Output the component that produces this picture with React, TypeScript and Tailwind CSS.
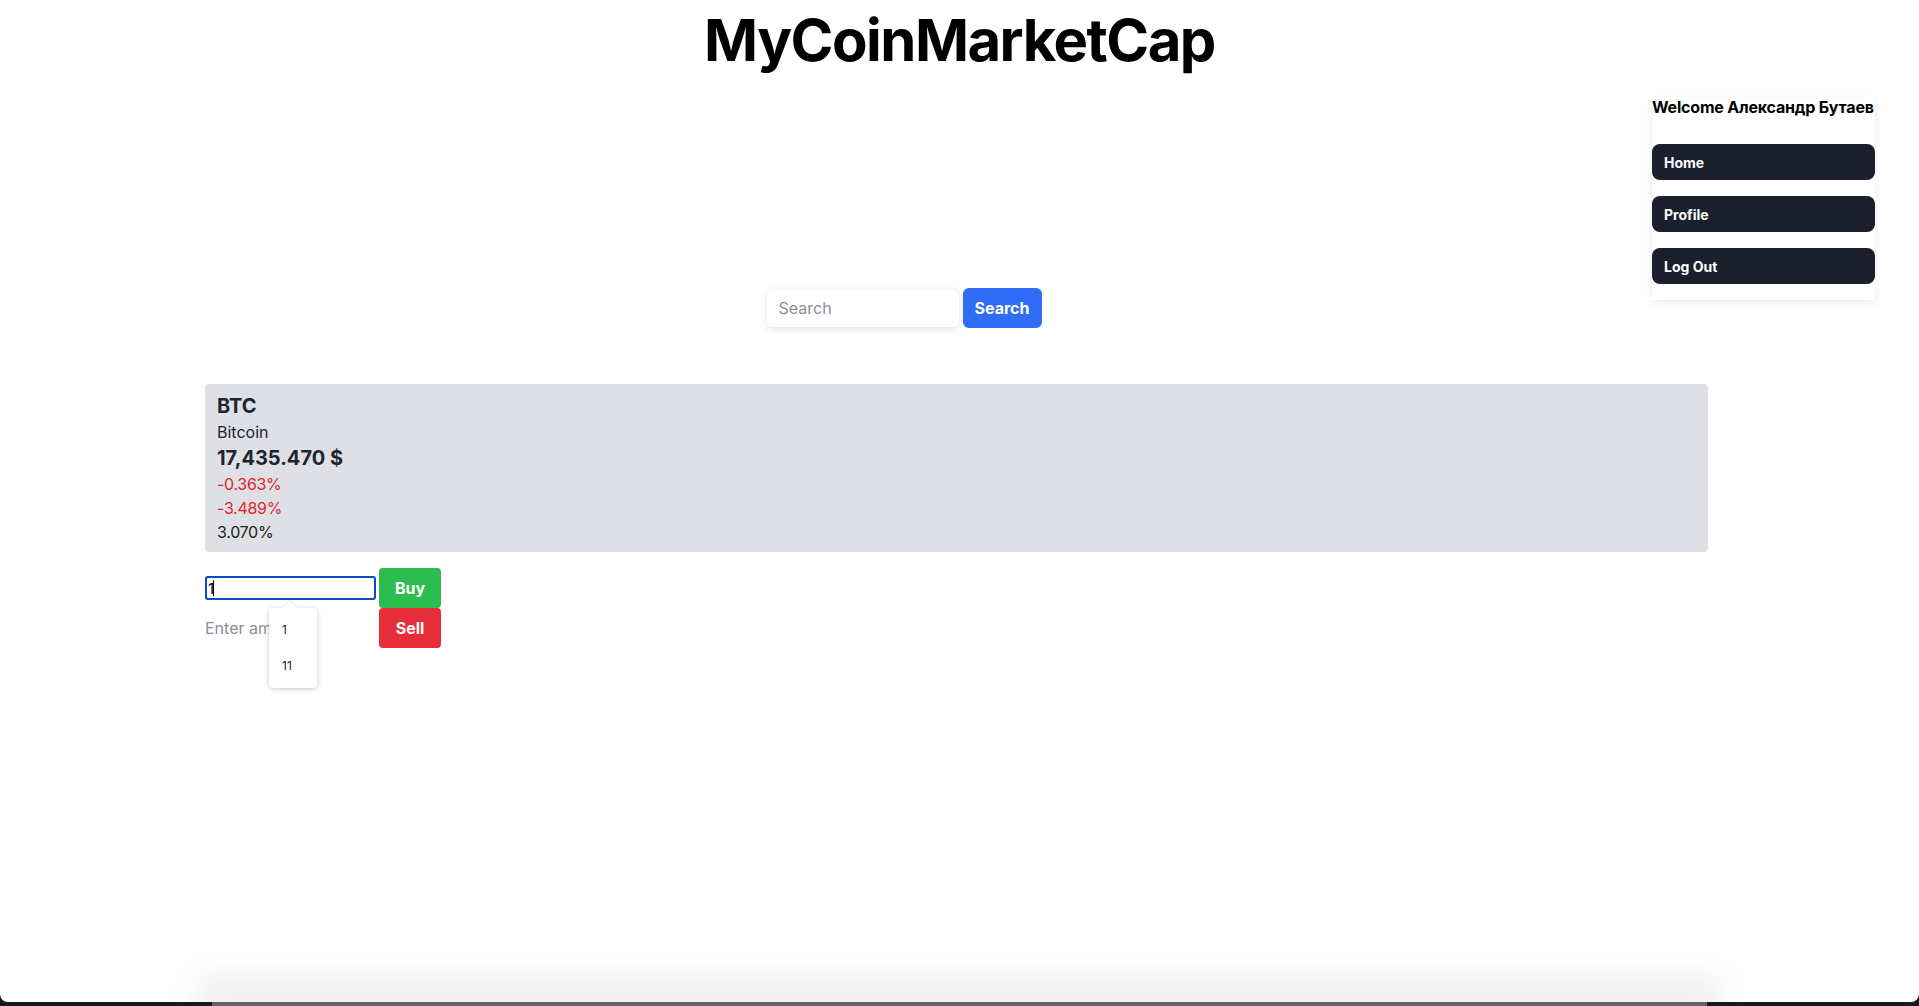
import { useState } from "react";

const menu = ["Home", "Profile", "Log Out"];

const App = () => {
  const [amount, setAmount] = useState("1");

  return (
    <div className="flex h-[1006px] flex-col overflow-hidden bg-[#1c191d] font-['Inter',sans-serif] text-black">
      <div className="flex flex-1 flex-col rounded-b-[8px] bg-white">
        {/* Header */}
        <h1 className="h-[80px] pt-[11px] text-center text-[58px] font-bold leading-none tracking-[-1.5px]">
          MyCoinMarketCap
        </h1>

        {/* Search + user menu */}
        <div className="flex items-start">
          <div className="flex flex-1 justify-center pl-[156px] pt-[208px]">
            <div className="flex items-center gap-1">
              <input
                className="h-[37px] w-[192px] rounded-md bg-white px-3 text-base shadow-[0_2px_8px_rgba(0,0,0,0.12)] outline-none placeholder:text-[#8a8f9c]"
                placeholder="Search"
              />
              <button className="h-10 w-[79px] rounded-md bg-[#306cf5] text-base font-bold text-white">
                Search
              </button>
            </div>
          </div>

          <aside className="mr-[44px] mt-[17px] flex w-[223px] flex-col bg-white pb-4 shadow-[0_3px_8px_rgba(0,0,0,0.08)]">
            <p className="whitespace-nowrap text-base font-bold leading-5 tracking-[-0.2px]">
              Welcome Александр Бутаев
            </p>
            <div className="mt-[27px] flex flex-col gap-4">
              {menu.map((item) => (
                <button
                  key={item}
                  className="h-9 rounded-lg bg-[#1b1f2b] pl-3 text-left text-[14px] font-bold text-white"
                >
                  {item}
                </button>
              ))}
            </div>
          </aside>
        </div>

        {/* Coin card */}
        <div className="ml-[205px] mt-[56px] w-[1503px]">
          <div className="rounded bg-[#dfe0e5] px-3 py-2 text-[#1f2430]">
            <h2 className="text-xl font-bold leading-7">BTC</h2>
            <p className="text-base leading-6">Bitcoin</p>
            <p className="text-xl font-bold leading-7">17,435.470 $</p>
            <p className="text-base leading-6 tracking-[-0.3px] text-[#e4232f]">-0.363%</p>
            <p className="text-base leading-6 tracking-[-0.3px] text-[#e4232f]">-3.489%</p>
            <p className="text-base leading-6 tracking-[-0.3px] text-[#222]">3.070%</p>
          </div>

          {/* Buy / Sell */}
          <div className="mt-4 flex flex-col">
            <div className="flex items-center gap-[3px]">
              <div className="relative">
                <input
                  value={amount}
                  onChange={(e) => setAmount(e.target.value)}
                  className="h-6 w-[171px] rounded-[3px] border-2 border-[#1248c8] bg-white px-[1px] text-[15px] outline-none"
                />
                <span className="absolute left-[8px] top-[4px] h-4 w-px bg-black" />

                {/* datalist popup */}
                <div className="absolute left-[64px] top-[32px] z-10 w-12 rounded-[4px] bg-white py-1 shadow-[0_1px_5px_rgba(0,0,0,0.22)]">
                  <span className="absolute -top-[5px] left-[16px] h-[10px] w-[10px] rotate-45 bg-white shadow-[-1px_-1px_2px_rgba(0,0,0,0.08)]" />
                  <div className="pl-[13px] text-[12px] leading-9 text-[#2a2018]">1</div>
                  <div className="pl-[13px] text-[12px] leading-9 text-[#2a2018]">11</div>
                </div>
              </div>
              <button className="h-10 w-[62px] rounded-[4px] bg-[#2bbd50] text-base font-bold text-white">
                Buy
              </button>
            </div>
            <div className="flex items-center gap-[3px]">
              <input
                className="h-6 w-[171px] bg-white text-base outline-none placeholder:text-[#8a8f9c]"
                placeholder="Enter amount"
              />
              <button className="h-10 w-[62px] rounded-[4px] bg-[#e62e3b] text-base font-bold text-white">
                Sell
              </button>
            </div>
          </div>
        </div>
      </div>

      {/* bottom strip */}
      <div className="relative z-10 mx-[212px] h-1 bg-[#6c5f68] shadow-[0_-8px_36px_14px_rgba(0,0,0,0.09)]" />
    </div>
  );
};

export default App;
